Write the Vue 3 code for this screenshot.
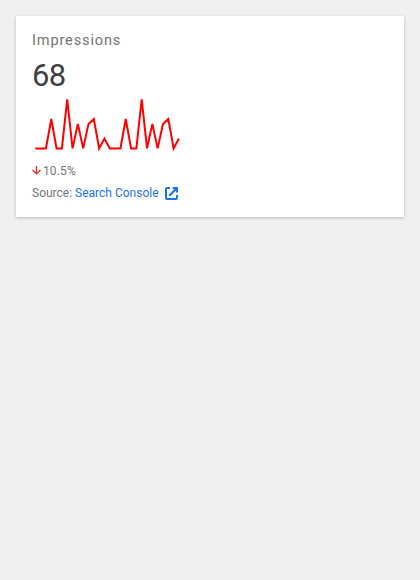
<script setup>
const values = [0, 0, 0, 6, 0, 0, 10, 0, 5, 0, 5, 6, 0, 2, 0, 0, 0, 6, 0, 0, 10, 0, 5, 0, 5, 6, 0, 2]
const points = values
  .map((v, i) => `${(3.3 + i * 5.32).toFixed(2)},${(54.4 - v * 4.9).toFixed(2)}`)
  .join(' ')
</script>

<template>
  <main class="page">
    <section class="card">
      <h3 class="title">Impressions</h3>
      <div class="value">68</div>
      <svg class="sparkline" width="150" height="60" viewBox="0 0 150 60" aria-hidden="true">
        <polyline :points="points" fill="none" stroke="#f00" stroke-width="2" />
      </svg>
      <div class="change">
        <svg class="arrow" width="9" height="9" viewBox="0 0 10 10" aria-hidden="true">
          <path d="M5 0v9M.6 4.4 5 8.8l4.4-4.4" fill="none" stroke="#d93025" stroke-width="1.5" />
        </svg>
        <span>10.5%</span>
      </div>
      <div class="source">
        <span>Source:&nbsp;</span>
        <a class="link">Search Console
          <svg class="external" width="13" height="13" viewBox="0 0 13 13" aria-hidden="true">
            <path d="M5 1H2Q1 1 1 2v9q0 1 1 1h9q1 0 1-1V8M7.6 1H12v4.4M12 1 4.2 8.8" fill="none" stroke="#1a73e8" stroke-width="2" />
          </svg>
        </a>
      </div>
    </section>
  </main>
</template>

<style>
body {
  background: #f0f0f0;
}
</style>

<style scoped>
.page {
  padding: 16px;
  font-family: Roboto, sans-serif;
}
.card {
  box-sizing: border-box;
  height: 201px;
  padding: 14px 16px;
  background: #fff;
  box-shadow: 0 1px 3px rgba(0, 0, 0, 0.24);
  color: #757575;
  font-size: 12px;
}
.title {
  margin: 0;
  font-size: 14.6px;
  font-weight: 400;
  line-height: 20px;
  letter-spacing: 0.83px;
}
.value {
  margin-top: 8px;
  color: #3c4043;
  font-size: 31px;
  line-height: 35px;
  letter-spacing: -0.6px;
}
.sparkline {
  display: block;
  margin-top: 1px;
}
.change {
  display: flex;
  align-items: center;
  gap: 2px;
  height: 18px;
  margin-top: 8px;
  letter-spacing: 0.12px;
}
.arrow {
  margin-bottom: 1px;
}
.source {
  display: flex;
  align-items: center;
  height: 18px;
  margin-top: 4px;
}
.link {
  display: flex;
  align-items: center;
  gap: 6px;
  color: #1a73e8;
}
</style>
